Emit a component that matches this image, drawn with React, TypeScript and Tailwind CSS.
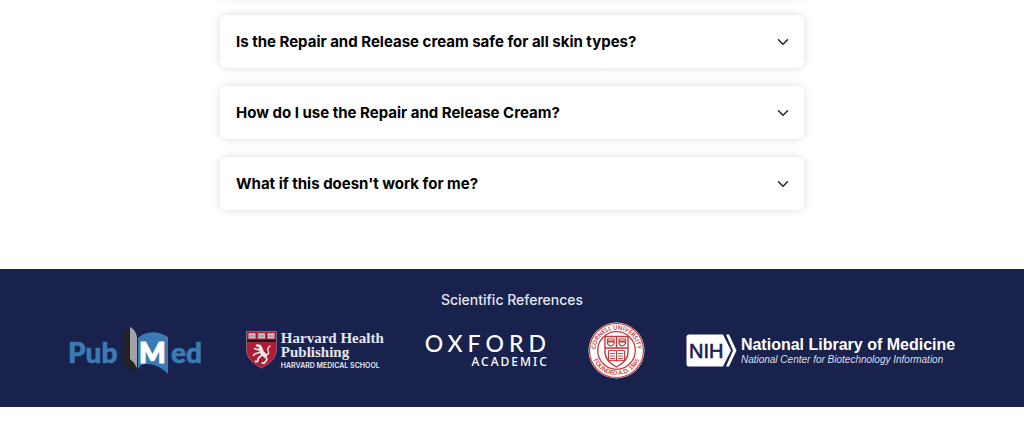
import { useState } from 'react';
import { ChevronDown } from 'lucide-react';

const faqs = [
  {
    question: 'Is the Repair and Release cream safe for all skin types?',
    answer: 'Yes. The formula is gentle and suitable for every skin type.',
  },
  {
    question: 'How do I use the Repair and Release Cream?',
    answer: 'Massage a small amount into the area twice a day.',
  },
  {
    question: "What if this doesn't work for me?",
    answer: 'Contact our support team and we will refund your order.',
  },
];

function PubMedLogo() {
  return (
    <svg width="136" height="52" viewBox="0 0 136 52" role="img" aria-label="PubMed" className="shrink-0">
      {/* open book */}
      <path d="M55 5 62 3v32l5 6 1 8-5-5-8-4z" fill="#222226" />
      <path d="M61 2c4 2 6 5 7 10v31l-3-5-4-4z" fill="#a3a3a5" />
      <path d="M69 13c7-7 20-8 30-1v37c-7-7-17-12-27-9l-3 4z" fill="#3b7bb3" />
      <g fontFamily="Lato, sans-serif" fontWeight="900" fontSize="28">
        <text x="-1" y="38" fill="#3b7bb3" stroke="#3b7bb3" strokeWidth=".6">Pub</text>
        <text x="70" y="38" fill="#ffffff" stroke="#ffffff" strokeWidth="1.2">M</text>
        <text x="102" y="38" fill="#3b7bb3" stroke="#3b7bb3" strokeWidth=".6">ed</text>
      </g>
    </svg>
  );
}

function HarvardLogo() {
  return (
    <div className="flex shrink-0 items-start gap-1">
      <svg width="31" height="38" viewBox="0 0 31 38" aria-hidden="true">
        <path d="M.5.5h30v18c0 9-7 14-15 18.500C7.500 32.500.5 27.500.5 18.500z" fill="#b01c34" stroke="#8f8398" strokeWidth=".7" />
        <path d="M1 9.800h29" stroke="#161218" strokeWidth="2" />
        <g fill="#c9c6cc">
          <path d="M2.500 2.500q2-1 3.500 0 1.500-1 3.500 0v5h-7z" />
          <path d="M12 2.500q2-1 3.500 0 1.500-1 3.500 0v5h-7z" />
          <path d="M21.500 2.500q2-1 3.500 0 1.500-1 3.500 0v5h-7z" />
        </g>
        <path d="M3 5h5.500M12.500 5H18M22 5h5.500" stroke="#6d6470" strokeWidth=".8" />
        {/* rampant lion */}
        <g fill="none" stroke="#e9e7ea" strokeLinecap="round" strokeLinejoin="round">
          <path d="m11 14.500 3 .5 1 2.500" strokeWidth="2.600" />
          <path d="m14.500 17.500 1.500 4 3 3" strokeWidth="4" />
          <path d="m13 19-4.500-1.500M13.500 21.500 8.500 23l-1 1.500" strokeWidth="1.600" />
          <path d="m16 24-3.500 3-1 3.500H9.500M19.500 25.500l1.500 3-2.500 3.500h-2" strokeWidth="1.800" />
          <path d="M20 24q4-1 2-4.500-1-2.500 2-4.500" strokeWidth="1.400" />
        </g>
      </svg>
      <div className="flex flex-col whitespace-nowrap text-[#e4e6f0]">
        <span className="font-['Liberation_Serif',serif] text-[15px] font-bold leading-[14px]">
          Harvard Health
          <br />
          Publishing
        </span>
        <span className="mt-0.5 font-[Inter,sans-serif] text-[7px] font-semibold leading-[10px]">HARVARD MEDICAL SCHOOL</span>
      </div>
    </div>
  );
}

function OxfordLogo() {
  return (
    <div className="flex shrink-0 flex-col items-end whitespace-nowrap text-white">
      <span className="-mr-1 font-[Lato,sans-serif] text-[23px] font-medium leading-[22px] tracking-[5px]">OXFORD</span>
      <span className="-mr-0.5 font-['Noto_Sans',sans-serif] text-[12px] font-medium leading-[16px] tracking-[2px]">ACADEMIC</span>
    </div>
  );
}

function CornellLogo() {
  return (
    <svg width="57" height="57" viewBox="0 0 57 57" role="img" aria-label="Cornell University" className="shrink-0">
      <defs>
        <path id="seal-top" d="M8.500 35A21 21 0 1 1 48.500 35" />
        <path id="seal-bottom" d="M4 33A25 25 0 0 0 53 33" />
      </defs>
      <circle cx="28.500" cy="28.500" r="28" fill="#fff" />
      <g fill="none" stroke="#c43a3c">
        <circle cx="28.500" cy="28.500" r="27" strokeWidth="1.200" />
        <circle cx="28.500" cy="28.500" r="18.800" strokeWidth="1.300" />
        <path d="M17 14.500h23v16c0 7-5 11-11.500 14.500C22 41.500 17 37.500 17 30.500z" strokeWidth="1.400" />
        <path d="M17 26h23M28.500 14.500V26" strokeWidth="1.400" />
        <path d="M19.500 17h6.500v4q0 2-3 3-3.500-1-3.500-3zM31 17h6.500v4q0 2-3.500 3-3-1-3-3z" strokeWidth="1.200" />
        <path d="M20 19.500h6M31 19.500h6" strokeWidth="1.800" />
        <path d="M20.500 29q4-1.500 8 0 4-1.500 8 0v10q-4-1.500-8 0-4-1.500-8 0zM28.500 29v10" strokeWidth="1.200" />
        <path d="M22 31.500h5M22 34h5M22 36.500h5M30 31.500h5M30 34h5M30 36.500h5" strokeWidth=".9" />
      </g>
      <g fill="#c43a3c" fontFamily="Lato, sans-serif" fontWeight="700" fontSize="6">
        <text textAnchor="middle">
          <textPath href="#seal-top" startOffset="50%">CORNELL UNIVERSITY</textPath>
        </text>
        <text textAnchor="middle">
          <textPath href="#seal-bottom" startOffset="50%">FOUNDED A.D. 1865</textPath>
        </text>
      </g>
    </svg>
  );
}

function NihLogo() {
  return (
    <div className="flex shrink-0 items-center gap-1">
      <svg width="51" height="33" viewBox="0 0 51 33" role="img" aria-label="NIH">
        <path d="M3 .5h34L45 16.500 37 32.500H3Q.5 32.500.5 30V3Q.5.500 3 .5z" fill="#fff" />
        <path d="M40 .5h3l7.500 16-7.500 16h-3l7-16z" fill="#fff" />
        <text x="3" y="24" fill="#19214d" stroke="#19214d" strokeWidth=".6" fontFamily="Liberation Sans, sans-serif" fontSize="20">NIH</text>
      </svg>
      <div className="flex flex-col whitespace-nowrap font-['Liberation_Sans',sans-serif] text-white">
        <span className="text-[16px] font-bold leading-[18px]">National Library of Medicine</span>
        <span className="text-[10px] italic leading-[12px] text-[#dcdfea]">National Center for Biotechnology Information</span>
      </div>
    </div>
  );
}

function App() {
  const [openIndex, setOpenIndex] = useState<number | null>(null);

  return (
    <div className="overflow-hidden bg-white font-[Inter,sans-serif]">
      {/* FAQ */}
      <section className="mx-auto flex max-w-[584px] flex-col gap-[18px] pb-[59px]">
        <div className="-mt-[9px] h-1.5 rounded-md bg-white shadow-[0_0_8px_rgba(0,0,0,0.14)]" aria-hidden="true" />
        {faqs.map((faq, idx) => (
          <div key={idx} className="rounded-md bg-white shadow-[0_0_8px_rgba(0,0,0,0.14)]">
            <button
              type="button"
              className="flex h-[53px] w-full cursor-pointer items-center justify-between pt-px pr-3 pl-4 text-left text-[15px] font-bold text-black"
              aria-expanded={openIndex === idx}
              onClick={() => setOpenIndex(openIndex === idx ? null : idx)}
            >
              {faq.question}
              <ChevronDown size={18} strokeWidth={2} className="shrink-0 text-[#222222]" />
            </button>
            {openIndex === idx && <p className="px-4 pb-4 text-sm text-gray-700">{faq.answer}</p>}
          </div>
        ))}
      </section>

      {/* REFERENCES */}
      <section className="bg-[#19214d] pt-5 pb-7">
        <h2 className="text-center text-[14px] font-medium leading-[22px] text-[#e4e6f0]">Scientific References</h2>
        <div className="mt-[11px] flex flex-wrap items-center justify-center gap-[41px]">
          <PubMedLogo />
          <HarvardLogo />
          <OxfordLogo />
          <CornellLogo />
          <NihLogo />
        </div>
      </section>
    </div>
  );
}

export default App;
